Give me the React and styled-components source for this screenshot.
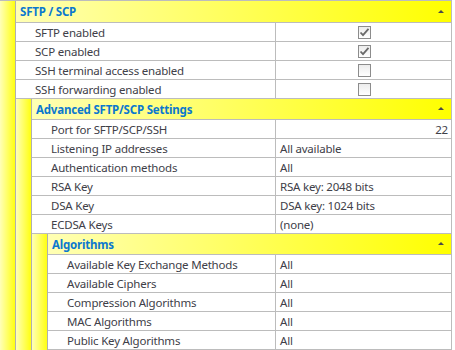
import styled, { createGlobalStyle } from "styled-components"

const GlobalStyle = createGlobalStyle`
    body {
        margin: 0;
        background: #ffffff;
        font-family: "Noto Sans", "Open Sans", sans-serif;
    }
`

const Table = styled.div`
    width: 452px;
    border-top: 1px solid #bcbcbc;
    border-right: 1px solid #bcbcbc;
    box-sizing: border-box;
    font-size: 11.5px;
    letter-spacing: -0.2px;
    color: #404048;
`

const Section = styled.div`
    display: flex;
`

const Gutter = styled.div`
    width: 15px;
    flex: none;
    border-right: 1px solid #b0b0b0;
    background: linear-gradient(to right, #ffffb8, #ffff10);
`

const Body = styled.div`
    flex: 1;
    display: flex;
    flex-direction: column;
    min-width: 0;
`

const Header = styled.div`
    height: ${p => p.$tall ? 21 : 20}px;
    display: flex;
    align-items: center;
    justify-content: space-between;
    padding: 0 7px 0 4px;
    border-bottom: 1px solid #bcbcbc;
    background: linear-gradient(to right, #ffffb4, #ffff00);
    color: #0b78cf;
    font-weight: bold;
    white-space: nowrap;
`

const Collapse = styled.span`
    width: 0;
    height: 0;
    border-left: 3px solid transparent;
    border-right: 3px solid transparent;
    border-bottom: 3px solid #4a4a4a;
    margin-top: -1px;
`

const Row = styled.div`
    display: flex;
    height: 18px;
    border-bottom: 1px solid #bcbcbc;
    background: #ffffff;
`

const Label = styled.div`
    flex: 1;
    min-width: 0;
    padding-left: 19px;
    display: flex;
    align-items: center;
    white-space: nowrap;
    overflow: hidden;
    border-right: 1px solid #bcbcbc;
`

const Value = styled.div`
    width: 175px;
    flex: none;
    box-sizing: border-box;
    display: flex;
    align-items: center;
    justify-content: ${p => p.$align === "center" ? "center" : p.$align === "right" ? "flex-end" : "flex-start"};
    padding: 0 3px 0 4px;
    white-space: nowrap;
`

const Box = styled.span`
    width: 13px;
    height: 13px;
    box-sizing: border-box;
    border: 1px solid #8c8c8c;
    background: linear-gradient(to bottom, #ececec, #ffffff);
    display: flex;
    align-items: center;
    justify-content: center;
`

const Check = ({ on }) => (
    <Box>
        {on && (
            <svg width="11" height="11" viewBox="0 0 11 11">
                <path d="M1.5 5.5 L4 8.2 L9.5 1.8" fill="none" stroke="#6a6a6a" strokeWidth="1.8" />
            </svg>
        )}
    </Box>
)

const algorithms = {
    title: "Algorithms",
    rows: [
        ["Available Key Exchange Methods", "All"],
        ["Available Ciphers", "All"],
        ["Compression Algorithms", "All"],
        ["MAC Algorithms", "All"],
        ["Public Key Algorithms", "All"],
    ],
}

const advanced = {
    title: "Advanced SFTP/SCP Settings",
    rows: [
        ["Port for SFTP/SCP/SSH", "22", "right"],
        ["Listening IP addresses", "All available"],
        ["Authentication methods", "All"],
        ["RSA Key", "RSA key: 2048 bits"],
        ["DSA Key", "DSA key: 1024 bits"],
        ["ECDSA Keys", "(none)"],
    ],
    child: algorithms,
}

const sftp = {
    title: "SFTP / SCP",
    tall: true,
    rows: [
        ["SFTP enabled", true],
        ["SCP enabled", true],
        ["SSH terminal access enabled", false],
        ["SSH forwarding enabled", false],
    ],
    child: advanced,
}

const Group = ({ data }) => (
    <Section>
        <Gutter />
        <Body>
            <Header $tall={data.tall}>
                <span>{data.title}</span>
                <Collapse />
            </Header>
            {data.rows.map(([label, value, align]) => (
                <Row key={label}>
                    <Label>{label}</Label>
                    {typeof value === "boolean" ? (
                        <Value $align="center"><Check on={value} /></Value>
                    ) : (
                        <Value $align={align}>{value}</Value>
                    )}
                </Row>
            ))}
            {data.child && <Group data={data.child} />}
        </Body>
    </Section>
)

export default function App() {
    return (
        <>
            <GlobalStyle />
            <Table>
                <Group data={sftp} />
            </Table>
        </>
    )
}
